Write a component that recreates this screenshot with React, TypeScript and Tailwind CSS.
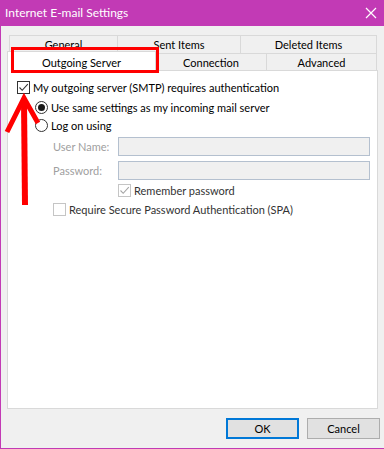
import React from "react";

const font = { fontFamily: 'Lato, "Segoe UI", sans-serif' };

function Check({ checked, disabled }: { checked?: boolean; disabled?: boolean }) {
  return (
    <div
      className={`w-[13px] h-[13px] shrink-0 border bg-white flex items-center justify-center ${
        disabled ? "border-[#c5c5c5]" : "border-[#333333]"
      }`}
    >
      {checked && (
        <svg width="11" height="11" viewBox="0 0 11 11">
          <path
            d="M1.5 5.5 L4.2 8.3 L9.8 2.2"
            fill="none"
            stroke={disabled ? "#a5a5a5" : "#333333"}
            strokeWidth="1.1"
          />
        </svg>
      )}
    </div>
  );
}

function Radio({ checked }: { checked?: boolean }) {
  return (
    <div className="w-[13px] h-[13px] shrink-0 rounded-full border border-[#333333] bg-white flex items-center justify-center">
      {checked && <div className="w-[7px] h-[7px] rounded-full bg-[#1a1a1a]" />}
    </div>
  );
}

export default function App() {
  return (
    <div
      className="relative w-[384px] h-[449px] bg-[#f0f0f0] border-l border-b border-[#c23ab5] flex flex-col text-[11px] text-black overflow-hidden whitespace-nowrap"
      style={font}
    >
      {/* title bar */}
      <div className="h-[26px] -ml-px bg-[#c23ab5] flex items-center justify-between pl-[5px] pr-[7px] text-white shrink-0">
        <span className="text-[12px] leading-none">Internet E-mail Settings</span>
        <svg width="12" height="12" viewBox="0 0 12 12">
          <path d="M1 1 L11 11 M11 1 L1 11" stroke="white" strokeWidth="1.2" />
        </svg>
      </div>

      {/* tabs */}
      <div className="mt-[9px] flex flex-col">
        <div className="flex ml-[8px] h-[18px]">
          <div className="w-[109px] border border-b-0 border-[#d9d9d9] flex items-center justify-center leading-none">
            General
          </div>
          <div className="w-[123px] border border-b-0 border-l-0 border-[#d9d9d9] flex items-center justify-center leading-none">
            Sent Items
          </div>
          <div className="w-[136px] border border-b-0 border-l-0 border-[#d9d9d9] flex items-center justify-center leading-none">
            Deleted Items
          </div>
        </div>
        <div className="flex ml-[6px] h-[18px] relative z-10">
          <div className="w-[149px] h-[21px] -mt-[2px] bg-white border border-b-0 border-[#d9d9d9] flex items-center justify-center leading-none">
            Outgoing Server
          </div>
          <div className="w-[111px] border border-l-0 border-[#d9d9d9] flex items-center justify-center leading-none">
            Connection
          </div>
          <div className="w-[110px] border border-l-0 border-[#d9d9d9] flex items-center justify-center leading-none">
            Advanced
          </div>
        </div>
      </div>

      {/* panel */}
      <div className="ml-[6px] w-[371px] h-[339px] -mt-px bg-white border border-[#d9d9d9] flex flex-col">
        <div className="mt-[10px] ml-[9px] flex items-center gap-[3px] h-[13px]">
          <Check checked />
          <span className="leading-none">My outgoing server (SMTP) requires authentication</span>
        </div>
        <div className="mt-[7px] ml-[27px] flex items-center gap-[3px] h-[13px]">
          <Radio checked />
          <span className="leading-none">Use same settings as my incoming mail server</span>
        </div>
        <div className="mt-[5px] ml-[27px] flex items-center gap-[3px] h-[13px]">
          <Radio />
          <span className="leading-none">Log on using</span>
        </div>
        <div className="mt-[5px] ml-[45px] flex items-center h-[19px]">
          <span className="w-[65px] text-[#a0a0a0] leading-none">User Name:</span>
          <div className="w-[252px] h-[19px] bg-[#f0f0f0] border border-[#b4c0cf]" />
        </div>
        <div className="mt-[5px] ml-[45px] flex items-center h-[19px]">
          <span className="w-[65px] text-[#a0a0a0] leading-none">Password:</span>
          <div className="w-[252px] h-[19px] bg-[#f0f0f0] border border-[#b4c0cf]" />
        </div>
        <div className="mt-[4px] ml-[110px] flex items-center gap-[3px] h-[13px]">
          <Check checked disabled />
          <span className="leading-none text-[#333333]">Remember password</span>
        </div>
        <div className="mt-[6px] ml-[45px] flex items-center gap-[3px] h-[13px]">
          <Check disabled />
          <span className="leading-none text-[#333333]">Require Secure Password Authentication (SPA)</span>
        </div>
      </div>

      {/* buttons */}
      <div className="mt-[9px] flex justify-end gap-[8px] pr-[4px]">
        <button className="w-[73px] h-[21px] bg-[#e1e1e1] border-2 border-[#0078d7] flex items-center justify-center leading-none text-[11px]">
          OK
        </button>
        <button className="w-[73px] h-[21px] bg-[#e1e1e1] border border-[#adadad] flex items-center justify-center leading-none text-[11px]">
          Cancel
        </button>
      </div>

      {/* red highlight box (overlay) */}
      <div className="absolute left-[10px] top-[47px] w-[148px] h-[26px] border-[3px] border-[#ff0000] z-20 pointer-events-none" />

      {/* red arrow (overlay) */}
      <svg className="absolute left-0 top-0 z-20 pointer-events-none" width="60" height="220" viewBox="0 0 60 220">
        <path d="M23 101 L24 205" stroke="#ff0000" strokeWidth="6" fill="none" />
        <path d="M6 132 L23 98 L37 123" stroke="#ff0000" strokeWidth="5" fill="none" strokeLinejoin="miter" />
      </svg>
    </div>
  );
}
